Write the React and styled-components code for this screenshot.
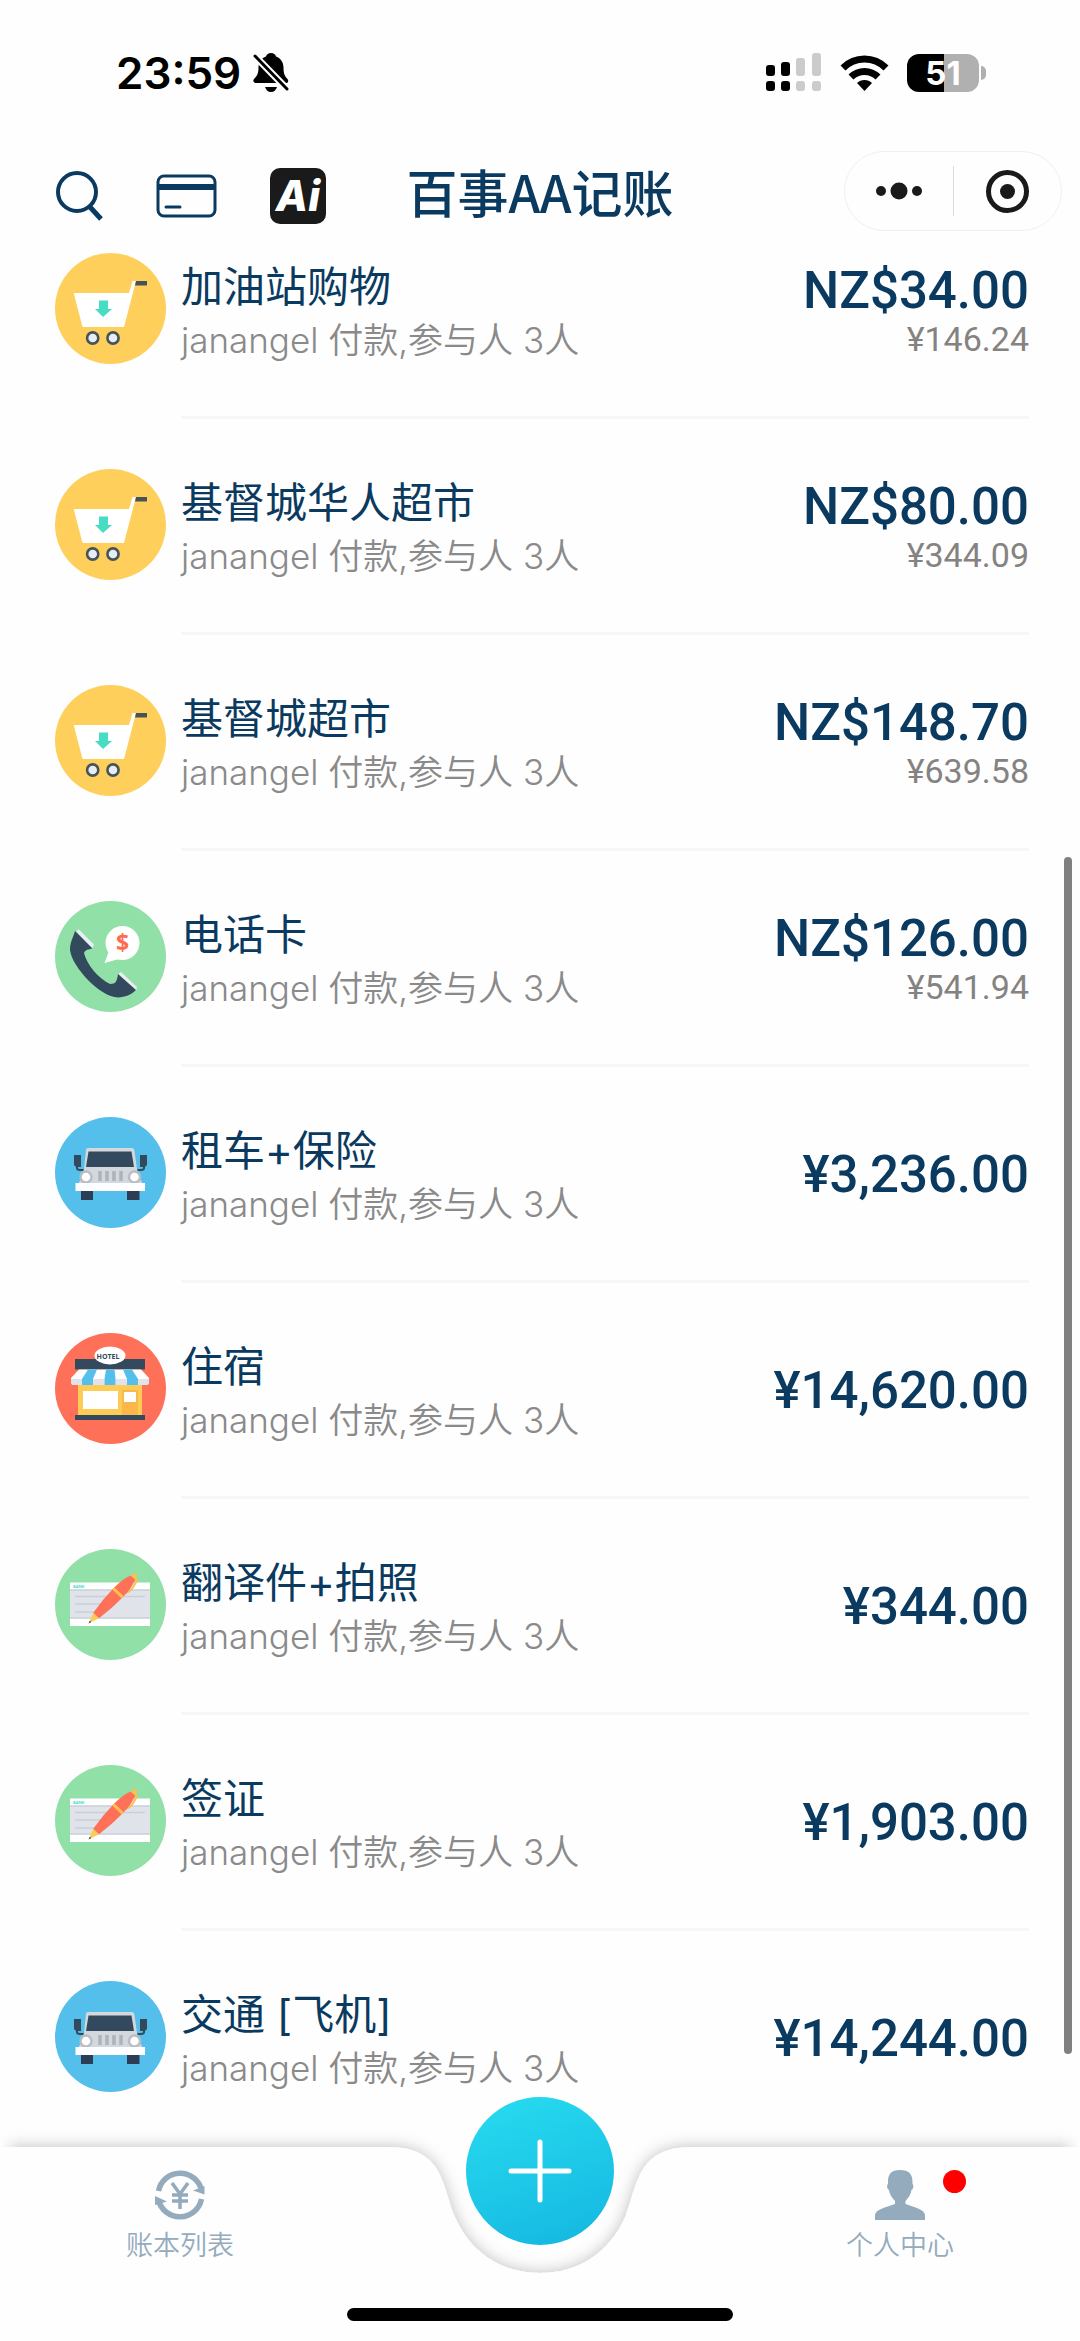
import React from 'react'
import styled, { createGlobalStyle } from 'styled-components'


const navy = '#0b3a60'
const slate = '#93abbd'

const GlobalStyle = createGlobalStyle`
  * {
    box-sizing: border-box;
  }

  body {
    margin: 0;
    background-color: #fefefe;
    font-family: Inter, "Noto Sans CJK SC", sans-serif;
  }

  button {
    border: none;
    padding: 0;
    background: none;
    font-family: inherit;
    cursor: pointer;
  }

  svg {
    display: block;
  }
`

const Page = styled.div`
  display: flex;
  flex-direction: column;
  min-height: 100vh;
`

const StatusBar = styled.div`
  display: flex;
  align-items: center;
  justify-content: space-between;
  height: 151px;
  padding: 0 94px 6px 116px;
`

const StatusGroup = styled.div`
  display: flex;
  align-items: center;
  gap: ${({ $gap }) => $gap}px;
`

const Clock = styled.time`
  color: #000;
  font-size: 44px;
  font-weight: 600;
  line-height: 54px;
`

const Battery = styled.div`
  display: flex;
  align-items: center;
  gap: 2px;
`

const BatteryBody = styled.div`
  width: 72px;
  border-radius: 12px;
  background: linear-gradient(90deg, #000 51%, #b0b0b0 51%);
  color: #fff;
  font-size: 33px;
  font-weight: 700;
  line-height: 38px;
  text-align: center;
`

const BatteryCap = styled.div`
  width: 5px;
  height: 14px;
  border-radius: 0 7px 7px 0;
  background-color: #b0b0b0;
`

const Header = styled.header`
  display: grid;
  grid-template-columns: 1fr auto 1fr;
  align-items: center;
  height: 80px;
  padding: 0 18px;
`

const Actions = styled.div`
  display: flex;
  align-items: center;
  gap: 53px;
  padding: 10px 0 0 38px;
`

const AiButton = styled.button`
  width: 56px;
  border-radius: 10px;
  background-color: #1a1a1a;
  color: #fff;
  font-size: 42px;
  font-style: italic;
  font-weight: 800;
  line-height: 56px;
`

const Title = styled.h1`
  margin: 0;
  color: ${navy};
  font-family: "Noto Sans CJK SC", sans-serif;
  font-size: 51px;
  font-weight: 500;
  line-height: 80px;
`

const Capsule = styled.div`
  display: flex;
  align-items: center;
  justify-self: end;
  width: 218px;
  height: 80px;
  border: 1px solid #f0f0f0;
  border-radius: 40px;
`

const CapsuleButton = styled.button`
  display: flex;
  flex: 1;
  justify-content: center;
  height: 50px;
  align-items: center;

  & + & {
    border-left: 1px solid #dcdcdc;
  }
`

const List = styled.ul`
  display: flex;
  flex: 1;
  flex-direction: column;
  gap: 50px;
  margin: 0;
  padding: 22px 51px 50px 55px;
  list-style: none;
`

const Row = styled.li`
  display: flex;
  gap: 15px;

  & > svg {
    flex: none;
  }
`

const RowBody = styled.div`
  display: flex;
  flex: 1;
  justify-content: space-between;
  padding-bottom: 52px;
  border-bottom: 3px solid #f7f7f7;

  ${Row}:last-child & {
    padding-bottom: 0;
    border-bottom: none;
  }
`

const RowText = styled.div`
  padding-top: 5px;
`

const Name = styled.div`
  color: ${navy};
  font-size: 42px;
  line-height: 58px;
`

const Detail = styled.div`
  color: #8a8a8a;
  font-size: 35px;
  font-weight: 350;
  line-height: 48px;
`

const Amounts = styled.div`
  display: flex;
  flex-direction: column;
  justify-content: ${({ $single }) => ($single ? 'center' : 'flex-start')};
  height: 111px;
  padding-top: ${({ $single }) => ($single ? 5 : 9)}px;
  font-family: Roboto, sans-serif;
  text-align: right;
`

const Amount = styled.div`
  color: ${navy};
  font-size: 51px;
  font-weight: 500;
  line-height: 58px;
`

const Converted = styled.div`
  color: #858381;
  font-size: 34px;
  line-height: 38px;
`

const ScrollThumb = styled.div`
  position: fixed;
  top: 857px;
  right: 8px;
  bottom: 287px;
  width: 8px;
  border-radius: 4px;
  background-color: #808080;
`

const Footer = styled.footer`
  position: sticky;
  bottom: 0;
  display: flex;
  flex-direction: column;
  height: 194px;
`

const Backdrop = styled.svg`
  position: absolute;
  bottom: 0;
  left: 0;
  width: 100%;
  height: 224px;
  mask-image: linear-gradient(90deg, transparent, #000 20px, #000 calc(100% - 20px), transparent);
`

const Tabs = styled.nav`
  position: relative;
  display: grid;
  grid-template-columns: repeat(3, 1fr);
  justify-items: center;
  align-items: start;
`

const Tab = styled.a`
  position: relative;
  display: flex;
  flex-direction: column;
  align-items: center;
  gap: 8px;
  padding-top: 23px;
  color: ${slate};
  font-size: 27px;
  font-weight: 350;
  line-height: 36px;
  text-decoration: none;
`

const Badge = styled.span`
  position: absolute;
  top: 23px;
  right: -12px;
  width: 23px;
  height: 23px;
  border-radius: 50%;
  background-color: #f00;
`

const AddButton = styled.button`
  display: flex;
  align-items: center;
  justify-content: center;
  width: 148px;
  height: 148px;
  margin-top: -50px;
  border-radius: 50%;
  background: linear-gradient(160deg, #28dcf0, #14b6e0);
`

const HomeIndicator = styled.div`
  position: relative;
  align-self: center;
  width: 386px;
  height: 13px;
  margin: auto 0 20px;
  border-radius: 7px;
  background-color: #000;
`

const BellOffIcon = () => (
  <svg width="36" height="39" viewBox="0 0 36 39">
    <path d="M18 0c2.500 0 4.500 1.500 5 3.500 5 2 7.500 6 7.500 11 0 7 1.500 8.500 4 11.500 1.500 2 .5 4-1.500 4H3c-2.500 0-3.500-2-2-4 2.500-3 4.500-4.500 4.500-11.500 0-5 2.500-9 7.500-11C13.500 1.500 15.500 0 18 0z" />
    <path d="M12 34h12c-1 3-3 5-6 5s-5-2-6-5z" />
    <path d="M0 1l36 37" stroke="#fefefe" strokeWidth="7" />
    <path d="M2 3l32 33" stroke="#000" strokeWidth="3" strokeLinecap="round" />
  </svg>
)

const SignalIcon = () => (
  <svg width="56" height="39" viewBox="0 0 56 39">
    <g fill="#000">
      <rect x="0" y="12" width="9" height="11" rx="3" />
      <rect x="15" y="9" width="9" height="14" rx="3" />
      <rect x="0" y="28" width="9" height="10" rx="3" />
      <rect x="15" y="28" width="9" height="10" rx="3" />
    </g>
    <g fill="#cbcbcb">
      <rect x="30" y="5" width="9" height="18" rx="3" />
      <rect x="46" y="0" width="9" height="23" rx="3" />
      <rect x="30" y="28" width="9" height="10" rx="3" />
      <rect x="46" y="28" width="9" height="10" rx="3" />
    </g>
  </svg>
)

const WifiIcon = () => (
  <svg width="49" height="36" viewBox="0 0 49 36">
    <path d="M24.500 36l-7.500-8c4-4 11-4 15 0z" />
    <path d="M11 22c7.500-7.500 19.500-7.500 27 0" fill="none" stroke="#000" strokeWidth="7" />
    <path d="M3 13c12-12 31-12 43 0" fill="none" stroke="#000" strokeWidth="7" />
  </svg>
)

const SearchIcon = () => (
  <svg width="47" height="50" viewBox="0 0 47 50" fill="none" stroke={navy} strokeWidth="4">
    <circle cx="21" cy="21" r="19" />
    <path d="M34 36l11 12" strokeWidth="5" />
  </svg>
)

const CardIcon = () => (
  <svg width="61" height="44" viewBox="0 0 61 44" fill="none" stroke={navy} strokeWidth="3">
    <rect x="2" y="2" width="57" height="40" rx="6" />
    <path d="M2 13h57" strokeWidth="6" />
    <path d="M10 33h14" strokeLinecap="round" />
  </svg>
)

const CartIcon = () => (
  <svg width="111" height="111" viewBox="0 0 111 111">
    <circle cx="55.500" cy="55.500" r="55.500" fill="#ffcf5c" />
    <path d="M18.700 40H74l3.500-12H81L69 74H27.500z" fill="#fff" />
    <path d="M81 28h11v4.500H80z" fill="#46545a" />
    <path d="M44 47.500h9V56h4l-9 8-8-8h4z" fill="#48dcc4" />
    <g fill="#e6edf5" stroke="#46545a" strokeWidth="2.600">
      <circle cx="37.700" cy="85" r="5.600" />
      <circle cx="58" cy="85" r="5.600" />
    </g>
  </svg>
)

const PhoneIcon = () => (
  <svg width="111" height="111" viewBox="0 0 111 111">
    <circle cx="55.500" cy="55.500" r="55.500" fill="#91e0a8" />
    <path d="M21 30l3-1.500 15 15L37 48zM63 73l3-2 16 15-1 4z" fill="#e9eef2" />
    <path d="M20 30l17.500 17.500c-4 1-7 1-8.500 4.500 3 12 14 25 26 31 6 0 7-3 8-10l18 16c-5 5-11 7-18 7.500C45 96 17 66 15 49c0-8 3-12 5-19z" fill="#334a5e" />
    <circle cx="67.500" cy="42" r="17" fill="#fff" />
    <path d="M54 50l-4.500 12L64 58z" fill="#fff" />
    <text x="67.500" y="50" fill="#ff6b50" fontFamily="Open Sans, sans-serif" fontSize="23" fontWeight="700" textAnchor="middle">$</text>
  </svg>
)

const CarIcon = () => (
  <svg width="111" height="111" viewBox="0 0 111 111">
    <circle cx="55.500" cy="55.500" r="55.500" fill="#55bfec" />
    <path d="M26 74h12v9H26zM72 74h12.500v9H72z" fill="#2b3e55" />
    <path d="M22 48v3q0 2 3 2h4M89 48v3q0 2-3 2h-4" fill="none" stroke="#334a5e" strokeWidth="2" />
    <path d="M33 31h44q2 0 2.300 2L82 52l5 14H24l5-14 2-19q0-2 2-2z" fill="#d3d7de" />
    <path d="M33.500 34.500h43L79 50H31z" fill="#334a5e" />
    <path d="M19 38h7v12h-5l-2-2zM85 38h7v10l-2 2h-5z" fill="#334a5e" />
    <path d="M45 54v10M52 54v10M59 54v10M66 54v10" stroke="#aeb3bb" strokeWidth="3.500" />
    <g fill="#fff" stroke="#b9bdc4" strokeWidth="2.500">
      <circle cx="31" cy="60" r="5.500" />
      <circle cx="79.500" cy="60" r="5.500" />
    </g>
    <path d="M20.500 66H90v8H20.500z" fill="#fff" />
  </svg>
)

const HotelIcon = () => (
  <svg width="111" height="111" viewBox="0 0 111 111">
    <circle cx="55.500" cy="55.500" r="55.500" fill="#ff7058" />
    <path d="M20 26h70v10.500H20z" fill="#334a5e" />
    <path d="M23 50h64v32H23z" fill="#fdcc57" />
    <path d="M67 57h16v25H67z" fill="#fbb748" />
    <path d="M28 58h35v18H28zM69 59h12v10H69z" fill="#fff" />
    <path d="M20 82h70v5H20z" fill="#334a5e" />
    <path d="M24 36.500h62L94 45v4q0 3-3 3H19q-3 0-3-3v-4z" fill="#fff" />
    <path d="M16 46h11v6h-8q-3 0-3-3zM38 46h11.500v6H38zM60.500 46H72v6H60.500zM83 46h11v3q0 3-3 3h-8z" fill="#e2e3ea" />
    <path d="M33 36.500h9L38 46v6H27v-6zM51 36.500h8.500l1 9.500v6h-11v-6zM68 36.500h9L83 46v6H72v-6z" fill="#55bfec" />
    <ellipse cx="55" cy="22.500" rx="15.500" ry="9" fill="#fff" />
    <text x="53" y="26" fill="#334a5e" fontFamily="Open Sans, sans-serif" fontSize="7" fontWeight="700" textAnchor="middle">HOTEL</text>
  </svg>
)

const ChequeIcon = () => (
  <svg width="111" height="111" viewBox="0 0 111 111">
    <circle cx="55.500" cy="55.500" r="55.500" fill="#91e0a8" />
    <path d="M15 33.500h80V77H15z" fill="#fff" />
    <path d="M15 41h80v28H15z" fill="#e0e4ea" />
    <path d="M15 41h80M20 47.500h70M20 55h40M20 63h30M15 69h80" stroke="#c9cfd8" strokeWidth="1.300" />
    <text x="18" y="39" fill="#4cdbc4" fontFamily="Open Sans, sans-serif" fontSize="4" fontWeight="700">BANK</text>
    <g transform="translate(33.500 74.500) rotate(-46)">
      <path d="M47 5q4 3 9 2l9-2v-4" fill="none" stroke="#fdbf50" strokeWidth="2" />
      <path d="M0 0l11-4v8z" fill="#fdcc57" />
      <path d="M0 0l3-1v2z" fill="#334a5e" />
      <path d="M11-4q16-2.500 32-2.500 14 0 21 3.500v6q-7 3.500-21 3.500Q27 6.500 11 4z" fill="#ff7058" />
      <path d="M64-3l5 1.500v3L64 3zM41-6.500h3v13h-3z" fill="#fdbf50" />
    </g>
  </svg>
)

const LedgerIcon = () => (
  <svg width="50" height="50" viewBox="0 0 50 50" fill="none" stroke={slate} strokeWidth="5.500">
    <path d="M3.500 21A22 22 0 0 1 46.500 20" />
    <path d="M46.500 29A22 22 0 0 1 3.500 30" />
    <path d="M38 20.500l11.500 4V16zM12 31.500L0 26v9z" fill={slate} stroke="none" />
    <path d="M17 13l8 11 8-11M25 23v16M17 25h16M17 31h16" strokeWidth="3.500" />
  </svg>
)

const UserIcon = () => (
  <svg width="50" height="50" viewBox="0 0 50 50" fill={slate}>
    <path d="M25 0c9 0 13 4 12.500 14 1.500 1 1 5-1 6-.5 4-3 8-6 11v3c8 3 19 5 19.500 11v5H0v-5c.5-6 12-8 20-11v-3c-3-3-5.500-7-6-11-2-1-2.500-5-1-6C12.500 4 16 0 25 0z" />
  </svg>
)

const icons = {
  cart: CartIcon,
  phone: PhoneIcon,
  car: CarIcon,
  hotel: HotelIcon,
  cheque: ChequeIcon,
}

const records = [
  { icon: 'cart', name: '加油站购物', amount: 'NZ$34.00', converted: '¥146.24' },
  { icon: 'cart', name: '基督城华人超市', amount: 'NZ$80.00', converted: '¥344.09' },
  { icon: 'cart', name: '基督城超市', amount: 'NZ$148.70', converted: '¥639.58' },
  { icon: 'phone', name: '电话卡', amount: 'NZ$126.00', converted: '¥541.94' },
  { icon: 'car', name: '租车+保险', amount: '¥3,236.00' },
  { icon: 'hotel', name: '住宿', amount: '¥14,620.00' },
  { icon: 'cheque', name: '翻译件+拍照', amount: '¥344.00' },
  { icon: 'cheque', name: '签证', amount: '¥1,903.00' },
  { icon: 'car', name: '交通 [飞机]', amount: '¥14,244.00' },
]

const Record = ({ icon, name, amount, converted }) => {
  const Icon = icons[icon]

  return (
    <Row>
      <Icon />
      <RowBody>
        <RowText>
          <Name>{name}</Name>
          <Detail>janangel 付款,参与人 3人</Detail>
        </RowText>
        <Amounts $single={!converted}>
          <Amount>{amount}</Amount>
          {converted && <Converted>{converted}</Converted>}
        </Amounts>
      </RowBody>
    </Row>
  )
}

const App = () => {

  return (
    <Page>
      <GlobalStyle />
      <StatusBar>
        <StatusGroup $gap={12}>
          <Clock>23:59</Clock>
          <BellOffIcon />
        </StatusGroup>
        <StatusGroup $gap={18}>
          <SignalIcon />
          <WifiIcon />
          <Battery>
            <BatteryBody>51</BatteryBody>
            <BatteryCap />
          </Battery>
        </StatusGroup>
      </StatusBar>
      <Header>
        <Actions>
          <button type="button" aria-label="搜索"><SearchIcon /></button>
          <button type="button" aria-label="银行卡"><CardIcon /></button>
          <AiButton type="button">Ai</AiButton>
        </Actions>
        <Title>百事AA记账</Title>
        <Capsule>
          <CapsuleButton type="button" aria-label="更多">
            <svg width="48" height="18" viewBox="0 0 48 18" fill="#1a1a1a">
              <circle cx="6" cy="9" r="5" />
              <circle cx="24" cy="9" r="8.500" />
              <circle cx="42" cy="9" r="5" />
            </svg>
          </CapsuleButton>
          <CapsuleButton type="button" aria-label="关闭">
            <svg width="43" height="43" viewBox="0 0 43 43" fill="#1a1a1a">
              <circle cx="21.500" cy="21.500" r="19" fill="none" stroke="#1a1a1a" strokeWidth="5" />
              <circle cx="21.500" cy="21.500" r="7.500" />
            </svg>
          </CapsuleButton>
        </Capsule>
      </Header>
      <List>
        {records.map((record) => (
          <Record key={record.name} {...record} />
        ))}
      </List>
      <ScrollThumb />
      <Footer>
        <Backdrop>
          <defs>
            <filter id="lift" filterUnits="userSpaceOnUse" x="-2000" y="-10" width="4000" height="250">
              <feDropShadow dx="0" dy="0" stdDeviation="8" floodColor="#000" floodOpacity="0.25" />
            </filter>
          </defs>
          <svg x="50%" overflow="visible">
            <path
              d="M-1990 30H-152C-98 30-98 66-86 98C-70 136-38 156 0 156S70 136 86 98C98 66 98 30 152 30H1990V230H-1990z"
              fill="#fefefe"
              filter="url(#lift)"
            />
          </svg>
        </Backdrop>
        <Tabs>
          <Tab href="#ledgers">
            <LedgerIcon />
            账本列表
          </Tab>
          <AddButton type="button" aria-label="记一笔">
            <svg width="64" height="64" viewBox="0 0 64 64" stroke="#fff" strokeWidth="5" strokeLinecap="round">
              <path d="M32 3v58M3 32h58" />
            </svg>
          </AddButton>
          <Tab href="#profile">
            <UserIcon />
            个人中心
            <Badge />
          </Tab>
        </Tabs>
        <HomeIndicator />
      </Footer>
    </Page>
  )
}

export default App
